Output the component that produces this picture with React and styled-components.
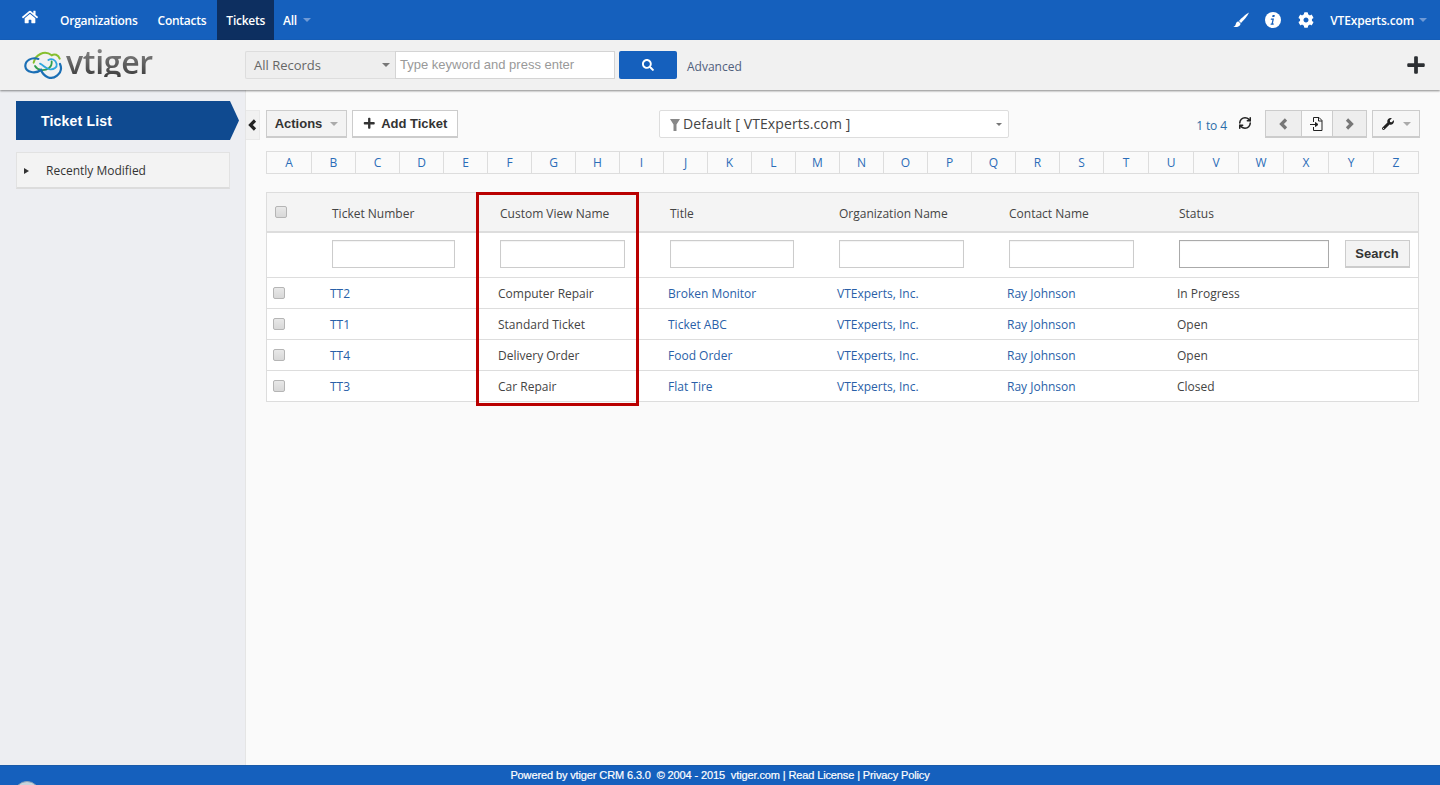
import React from 'react';
import styled, { createGlobalStyle } from 'styled-components';
import { FaHome, FaCog, FaPlus, FaSearch, FaWrench } from 'react-icons/fa';
import { RefreshCw } from 'lucide-react';

const Global = createGlobalStyle`
  html, body { margin: 0; padding: 0; height: 100%; overflow: hidden; }
  body { font-family: "Open Sans", "Liberation Sans", sans-serif; font-size: 12px; color: #333; }
  #root { height: 100%; }
  * { box-sizing: border-box; }
`;
const Page = styled.div`display:flex;flex-direction:column;height:785px;background:#fafafa;`;
const TopBar = styled.div`height:40px;flex:none;background:#1560bd;display:flex;align-items:center;color:#fff;padding-right:13px;`;
const HomeLink = styled.a`width:50px;padding-left:22px;height:40px;display:flex;align-items:flex-start;padding-top:9px;font-size:16px;color:#fff;`;
const NavItem = styled.a`
  height:40px;display:flex;align-items:center;padding:0 ${p => p.$pr ?? 10}px 0 ${p => p.$pl ?? 10}px;font-size:12px;font-weight:600;letter-spacing:-0.25px;color:#fff;
  background:${p => p.$active ? '#0d2f60' : 'transparent'};
`;
const Caret = styled.span`
  display:inline-block;flex:none;width:0;height:0;margin-left:${p => p.$gap || 6}px;
  border-left:${p => p.$size || 4}px solid transparent;border-right:${p => p.$size || 4}px solid transparent;border-top:${p => p.$size || 4}px solid ${p => p.$color || '#6f9ad6'};
`;
const TopRight = styled.div`margin-left:auto;display:flex;align-items:center;`;
const TopIcon = styled.span`display:flex;font-size:16px;margin-right:${p => p.$mr}px;`;
const UserName = styled.span`font-size:12px;font-weight:600;letter-spacing:-0.15px;`;

const SearchBar = styled.div`
  height:50px;flex:none;background:#f1f1f1;display:flex;align-items:center;padding:0 14px 0 23px;position:relative;z-index:2;
  box-shadow:0 1px 2px rgba(0,0,0,.45);
`;
const Logo = styled.div`width:222px;display:flex;align-items:center;margin-top:-1px;`;
const LogoText = styled.span`
  font-family:"Open Sans",sans-serif;font-weight:600;font-size:32px;line-height:30px;letter-spacing:-0.3px;margin-left:3px;margin-top:-5px;
  background:linear-gradient(#8a8a8a,#3e3e3e);-webkit-background-clip:text;background-clip:text;color:transparent;
`;
const RecordSelect = styled.div`
  width:150px;height:28px;background:#eee;border:1px solid #ddd;border-right:0;border-radius:2px 0 0 2px;display:flex;align-items:center;padding:0 5px 0 8px;
  font-size:13px;color:#666;justify-content:space-between;
`;
const SearchInput = styled.div`
  width:220px;height:28px;background:#fff;border:1px solid #d4d4d4;padding:0 4px 2px;display:flex;align-items:center;
  font-family:"Liberation Sans",sans-serif;font-size:13px;color:#999;
`;
const SearchBtn = styled.button`
  width:58px;height:28px;margin-left:4px;border:0;border-radius:2px;background:#1560bd;color:#fff;font-size:12px;display:flex;align-items:center;justify-content:center;padding:0;
`;
const Advanced = styled.a`margin-left:10px;font-size:12px;color:#50607c;padding-top:2px;`;
const BigPlus = styled.span`margin-left:auto;display:flex;font-size:20px;color:#2c2f33;`;

const Main = styled.div`flex:1;display:flex;min-height:0;`;
const Sidebar = styled.div`width:246px;flex:none;background:#edeef2;border-right:1px solid #e5e5e5;padding:11px 0 0 16px;`;
const TicketList = styled.div`
  width:223px;height:39px;background:#0f4a90;color:#fff;font-family:"Liberation Sans",sans-serif;font-weight:700;font-size:14px;letter-spacing:0.2px;display:flex;align-items:center;padding-left:25px;
  clip-path:polygon(0 0,214px 0,223px 50%,214px 100%,0 100%);
`;
const Recent = styled.div`
  width:214px;height:37px;margin-top:12px;background:#f3f3f3;border:1px solid #e2e2e2;border-bottom:2px solid #dcdcdc;display:flex;align-items:center;font-size:12px;color:#333;padding:1px 0 0 7px;
`;
const Tri = styled.span`
  width:0;height:0;border-top:3px solid transparent;border-bottom:3px solid transparent;border-left:5px solid #333;margin-right:17px;
`;
const Content = styled.div`flex:1;position:relative;padding:20px 0 0 20px;min-width:0;`;
const Toggle = styled.div`
  position:absolute;left:0;top:20px;width:14px;height:30px;background:#f1f1f1;border:1px solid #e8e8e8;border-left:0;display:flex;align-items:center;justify-content:center;color:#222;
`;
const Toolbar = styled.div`display:flex;align-items:center;height:28px;width:1154px;`;
const Btn = styled.button`
  height:28px;border:1px solid #ccc;border-bottom-width:2px;background:${p => p.$light ? '#fff' : '#f3f3f3'};color:#333;padding:0;
  font-family:"Liberation Sans",sans-serif;font-weight:700;font-size:13px;display:flex;align-items:center;justify-content:center;
  width:${p => p.$w}px;margin-left:${p => p.$ml || 0}px;
`;
const PlusIcon = styled.span`display:flex;font-size:12.5px;margin-right:6px;`;
const ViewSelect = styled.div`
  margin-left:201px;width:350px;height:28px;background:#fff;border:1px solid #ddd;border-radius:2px;display:flex;align-items:center;padding:0 6px 2px 10px;
  font-size:14px;letter-spacing:0.12px;color:#444;
`;
const FilterIcon = styled.span`display:flex;margin-right:3px;margin-top:3px;`;
const PageInfo = styled.span`margin-left:auto;font-size:12px;letter-spacing:-0.1px;color:#2a6ca8;margin-top:3px;`;
const Refresh = styled.span`display:flex;color:#222;margin:-2px 13px 0 11px;`;
const NavGroup = styled.div`display:flex;height:28px;border:1px solid #ccc;border-bottom-width:2px;background:#eee;`;
const NavCell = styled.div`
  width:${p => p.$w}px;display:flex;align-items:center;justify-content:center;
  ${p => p.$mid && 'background:#fafafa;border:solid #ccc;border-width:0 1px;'}
`;
const ToolBtn = styled.div`
  margin-left:5px;width:48px;height:28px;border:1px solid #ccc;border-bottom-width:2px;background:#f6f6f6;display:flex;align-items:center;justify-content:center;font-size:12px;color:#222;
`;
const Alpha = styled.div`
  display:grid;grid-template-columns:repeat(19,44px) repeat(7,45px);width:1153px;height:23px;margin-top:13px;border:1px solid #ddd;background:#fafafa;
`;
const Letter = styled.a`
  display:flex;align-items:center;justify-content:center;font-size:12px;color:#2a6cb8;border-left:${p => p.$first ? '0' : '1px solid #ddd'};
`;
const TableWrap = styled.div`position:relative;margin-top:18px;width:1153px;`;
const Table = styled.table`width:100%;table-layout:fixed;border-collapse:collapse;border:1px solid #ddd;background:#fff;font-size:12px;`;
const HeadCell = styled.th`
  height:39px;padding:3px 0 0 ${p => p.$pl ?? 10.5}px;background:#f4f4f4;border-bottom:2px solid #ddd;text-align:left;font-weight:400;color:#444;font-size:12px;
`;
const FilterCell = styled.td`height:46px;padding:0 0 1px ${p => p.$pl ?? 10}px;vertical-align:middle;`;
const FilterField = styled.div`
  height:28px;width:${p => p.$w}px;border:1px solid ${p => p.$dark ? '#aaa' : '#ccc'};background:#fff;box-shadow:inset 0 1px 1px rgba(0,0,0,.05);
`;
const SearchSmall = styled.button`
  display:block;width:65px;height:28px;border:1px solid #ccc;border-bottom-width:2px;background:#f3f3f3;color:#333;font-family:"Liberation Sans",sans-serif;font-weight:700;font-size:13px;padding:0;
`;
const Row = styled.tr`border-top:1px solid #ddd;`;
const Cell = styled.td`height:31px;padding:0 0 0 ${p => p.$pl ?? 8.5}px;color:${p => p.$link ? '#2a5fa8' : '#444'};vertical-align:middle;`;
const Check = styled.span`
  display:block;width:12px;height:12px;border:1px solid #b5b5b5;border-radius:2px;background:linear-gradient(#e8e8e8,#d8d8d8);margin-top:${p => p.$mt || 0}px;
`;
const RedBox = styled.div`position:absolute;left:210px;top:0;width:163px;height:214px;border:3px solid #b90000;pointer-events:none;`;
const Footer = styled.div`
  height:20px;flex:none;background:#1560bd;color:#fff;font-family:"Liberation Sans",sans-serif;font-size:11px;letter-spacing:-0.12px;display:flex;align-items:center;justify-content:center;padding-bottom:1px;position:relative;overflow:hidden;
  border-top:1px solid #1a5aa8;-webkit-text-stroke:0.2px #fff;
`;
const FootBadge = styled.span`position:absolute;left:14px;top:15px;width:26px;height:26px;border-radius:50%;background:#c6d3dc;border:1px solid #8da4b5;`;

const Chevron = ({ left, color = '#777', size = 12 }) => (
  <svg width={size * 0.75} height={size} viewBox="0 0 9 12" fill="none" stroke={color} strokeWidth="3.2">
    <polyline points={left ? '7,1.5 2.5,6 7,10.5' : '2,1.5 6.5,6 2,10.5'} />
  </svg>
);

const rows = [
  ['TT2', 'Computer Repair', 'Broken Monitor', 'In Progress'],
  ['TT1', 'Standard Ticket', 'Ticket ABC', 'Open'],
  ['TT4', 'Delivery Order', 'Food Order', 'Open'],
  ['TT3', 'Car Repair', 'Flat Tire', 'Closed'],
];
const letters = 'ABCDEFGHIJKLMNOPQRSTUVWXYZ'.split('');
const heads = ['Ticket Number', 'Custom View Name', 'Title', 'Organization Name', 'Contact Name', 'Status'];
const filterW = [123, 125, 124, 125, 125];

export default function App() {
  return (
    <Page>
      <Global />
      <TopBar>
        <HomeLink><FaHome /></HomeLink>
        <NavItem>Organizations</NavItem>
        <NavItem $pl={10} $pr={11}>Contacts</NavItem>
        <NavItem $active $pl={9} $pr={9}>Tickets</NavItem>
        <NavItem $pl={9}>All<Caret /></NavItem>
        <TopRight>
          <TopIcon $mr={16}>
            <svg width="16" height="16" viewBox="0 0 16 16" fill="#fff">
              <path d="M16 .5C13 2 8.500 6 6 9l2 2c3-3 6.500-7 8-10.500z" />
              <path d="M5.500 9.500C3 9.500 3 12 2.500 13c-.5 1-1.500 1.500-2 2 3 .5 7-.5 7-3.500z" />
            </svg>
          </TopIcon>
          <TopIcon $mr={17}>
            <svg width="16" height="16" viewBox="0 0 16 16">
              <circle cx="8" cy="8" r="8" fill="#fff" />
              <path d="M7.600 3.100h2.200l-.4 2H7.200zM6 6.400h3l-1.100 5h1l-.3 1.300H5.500l.3-1.300h.8l.8-3.700H5.700z" fill="#1560bd" />
            </svg>
          </TopIcon>
          <TopIcon $mr={16}><FaCog /></TopIcon>
          <UserName>VTExperts.com</UserName><Caret $gap={5} />
        </TopRight>
      </TopBar>
      <SearchBar>
        <Logo>
          <svg width="40" height="30" viewBox="20 20 120 90" fill="none" strokeLinecap="round">
            <path d="M52 58C56 36 84 18 106 36c8-6 20-2 24 10" stroke="#86bf2e" strokeWidth="6" />
            <path d="M56 68c8 14 28 16 42 6 6-5 9-12 8-20" stroke="#2f9e4f" strokeWidth="5.500" />
            <path d="M66 47C46 40 26 52 27 69c2 19 30 23 47 11 8 20 30 32 48 17 12-10 14-24 9-35" stroke="#1b6fb5" strokeWidth="6.500" />
            <path d="M96 50c9-6 22-2 25 12 2 10-8 17-20 16-12-1-20-13-30-17" stroke="#2fa6df" strokeWidth="5.500" />
          </svg>
          <LogoText>vtiger</LogoText>
        </Logo>
        <RecordSelect>All Records<Caret $color="#777" /></RecordSelect>
        <SearchInput>Type keyword and press enter</SearchInput>
        <SearchBtn><FaSearch /></SearchBtn>
        <Advanced>Advanced</Advanced>
        <BigPlus><FaPlus /></BigPlus>
      </SearchBar>
      <Main>
        <Sidebar>
          <TicketList>Ticket List</TicketList>
          <Recent><Tri />Recently Modified</Recent>
        </Sidebar>
        <Content>
          <Toggle><Chevron left color="#222" size={12} /></Toggle>
          <Toolbar>
            <Btn $w={81}>Actions<Caret $color="#aaa" $gap={8} /></Btn>
            <Btn $w={106} $ml={5} $light><PlusIcon><FaPlus /></PlusIcon>Add Ticket</Btn>
            <ViewSelect>
              <FilterIcon>
                <svg width="10" height="12" viewBox="0 0 10 12" fill="#888"><path d="M0 0h10L6.500 5.500V12h-3V5.500z" /></svg>
              </FilterIcon>
              Default [ VTExperts.com ]
              <Caret $color="#777" $size={3.5} style={{ marginLeft: 'auto', marginTop: 2 }} />
            </ViewSelect>
            <PageInfo>1 to 4</PageInfo>
            <Refresh><RefreshCw size={14} strokeWidth={2.6} /></Refresh>
            <NavGroup>
              <NavCell $w={35}><Chevron left /></NavCell>
              <NavCell $w={32} $mid>
                <svg width="14" height="14" viewBox="0 0 14 14" fill="none" stroke="#222" strokeWidth="1">
                  <path d="M3.500 5V.5h5.500l3 3v10h-8.500V10" />
                  <path d="M8.500.5v3.500h3.500" />
                  <path d="M0 7.500h5.500" />
                  <path d="M5.500 5.500l2.500 2-2.500 2z" fill="#222" />
                </svg>
              </NavCell>
              <NavCell $w={33}><Chevron /></NavCell>
            </NavGroup>
            <ToolBtn><FaWrench /><Caret $color="#aaa" $gap={9} /></ToolBtn>
          </Toolbar>
          <Alpha>
            {letters.map((l, i) => <Letter key={l} $first={i === 0}>{l}</Letter>)}
          </Alpha>
          <TableWrap>
            <Table>
              <colgroup>
                <col style={{ width: 55 }} /><col style={{ width: 168 }} /><col style={{ width: 170 }} />
                <col style={{ width: 169 }} /><col style={{ width: 170 }} /><col style={{ width: 170 }} />
                <col style={{ width: 170 }} /><col />
              </colgroup>
              <thead>
                <tr>
                  <HeadCell $pl={8}><Check $mt={-2} /></HeadCell>
                  {heads.map(h => <HeadCell key={h}>{h}</HeadCell>)}
                  <HeadCell />
                </tr>
              </thead>
              <tbody>
                <tr>
                  <FilterCell />
                  {filterW.map((w, i) => <FilterCell key={i}><FilterField $w={w} /></FilterCell>)}
                  <FilterCell><FilterField $w={150} $dark /></FilterCell>
                  <FilterCell $pl={6}><SearchSmall>Search</SearchSmall></FilterCell>
                </tr>
                {rows.map(r => (
                  <Row key={r[0]}>
                    <Cell $pl={6}><Check /></Cell>
                    <Cell $link>{r[0]}</Cell>
                    <Cell>{r[1]}</Cell>
                    <Cell $link>{r[2]}</Cell>
                    <Cell $link>VTExperts, Inc.</Cell>
                    <Cell $link>Ray Johnson</Cell>
                    <Cell colSpan={2}>{r[3]}</Cell>
                  </Row>
                ))}
              </tbody>
            </Table>
            <RedBox />
          </TableWrap>
        </Content>
      </Main>
      <Footer>
        <FootBadge />
        Powered by vtiger CRM 6.3.0&nbsp; © 2004 - 2015&nbsp; vtiger.com | Read License | Privacy Policy
      </Footer>
    </Page>
  );
}
